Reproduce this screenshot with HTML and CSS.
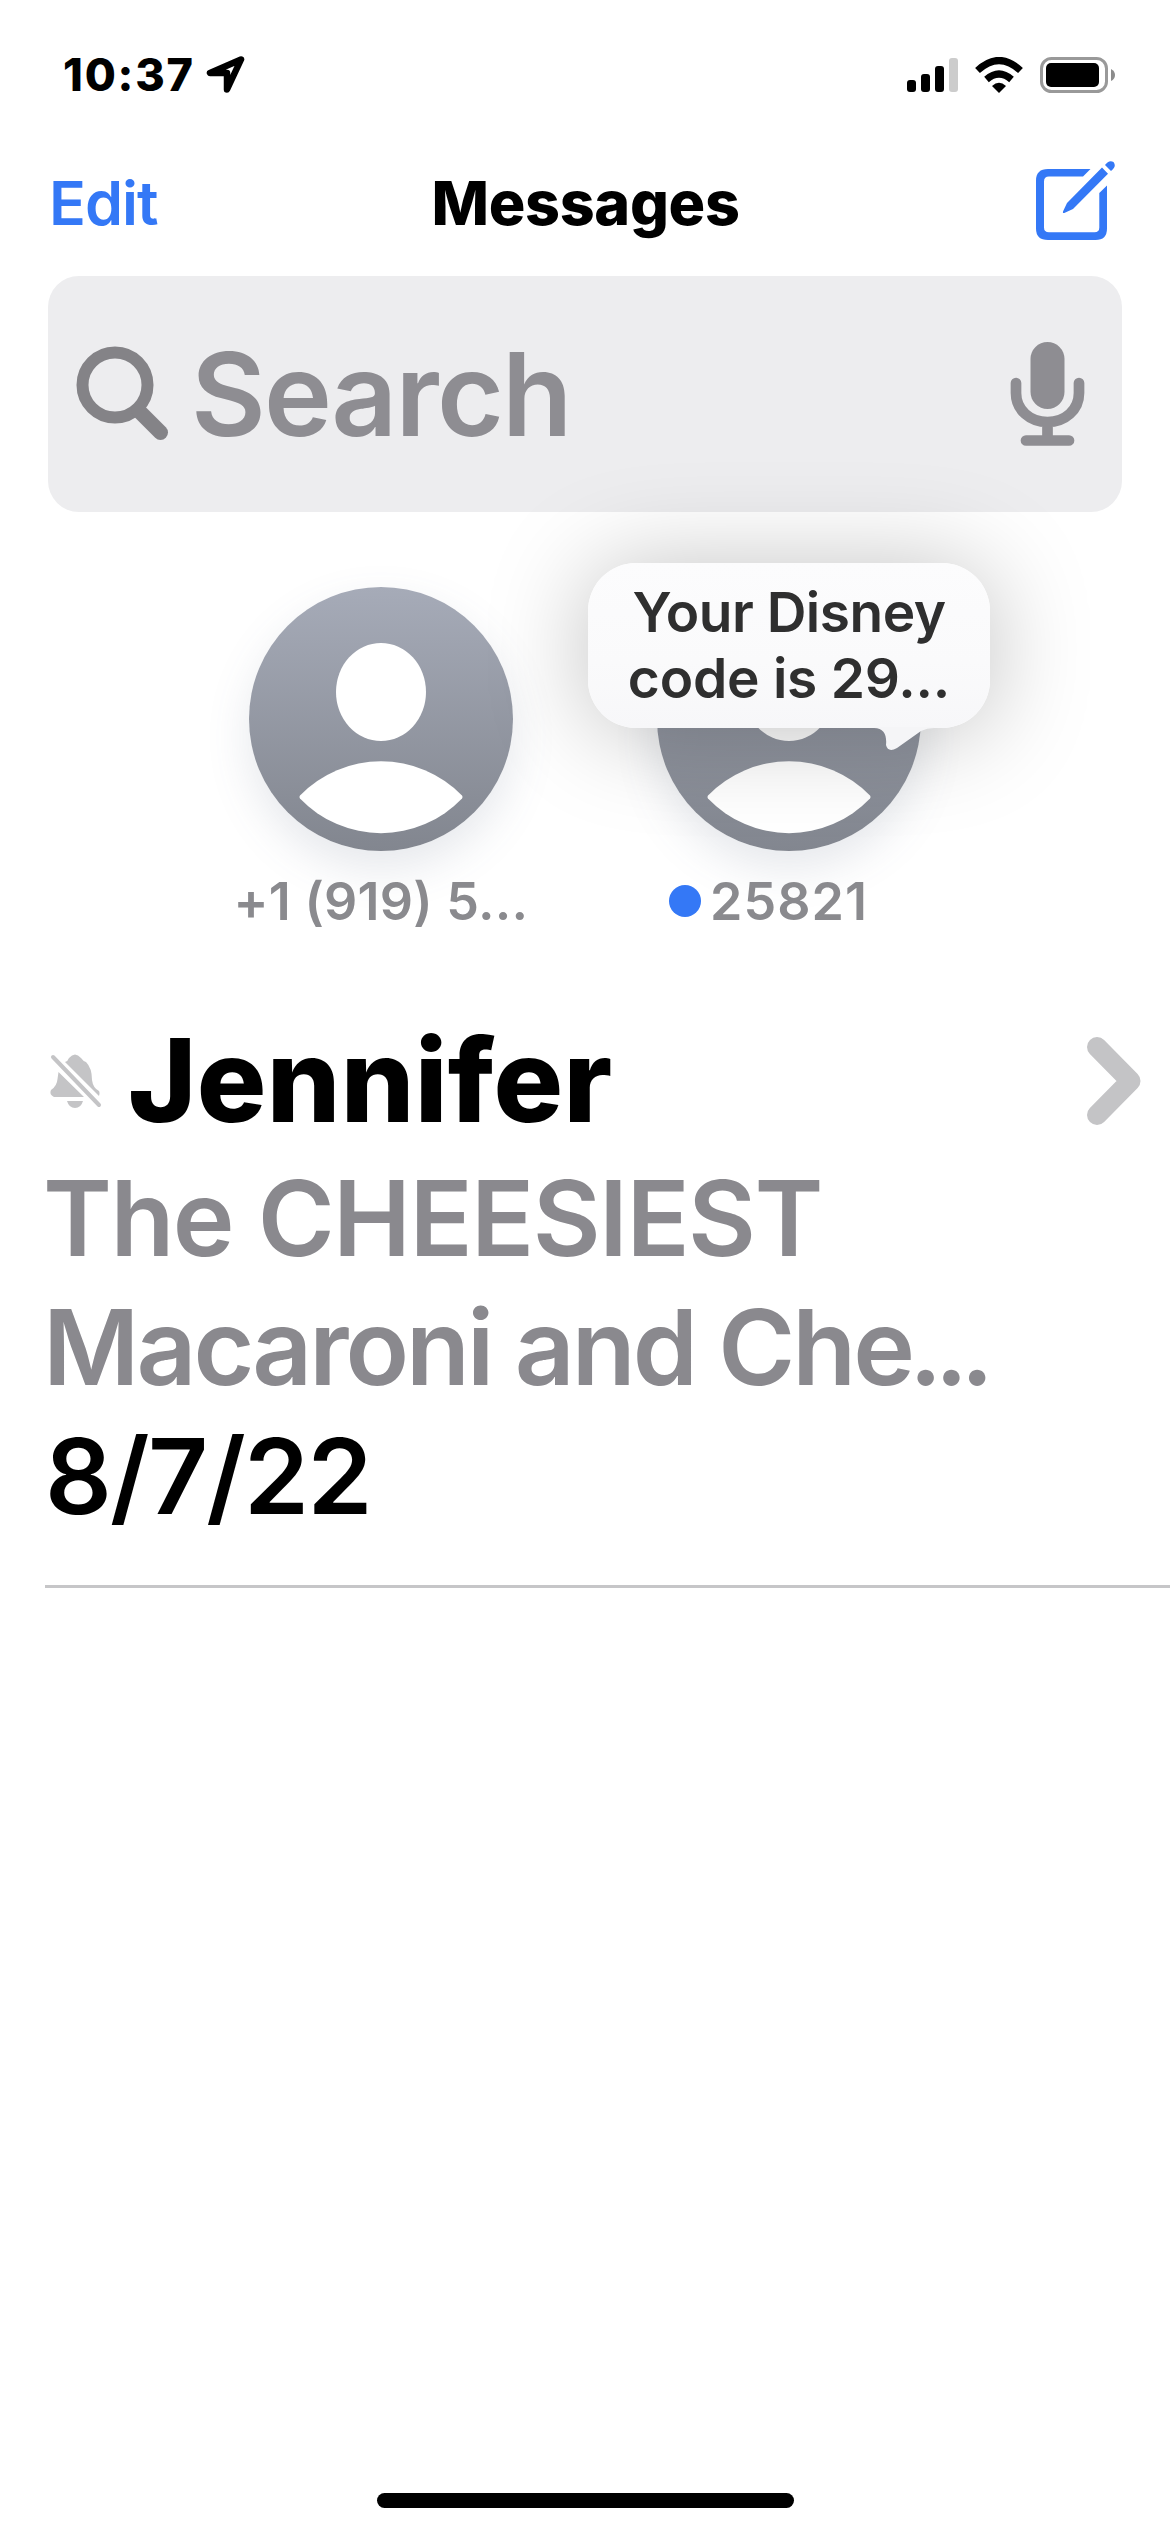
FILE: index.html
```html
<!DOCTYPE html>
<html lang="en">
<head>
<meta charset="utf-8">
<title>Messages</title>
<link rel="stylesheet" href="styles.css">
</head>
<body>
<div class="screen">
  <header class="status">
    <div class="status-left">
      <span class="time">10:37</span>
      <svg class="location" width="40" height="40" viewBox="0 0 40 40"><path d="M35 4.500L4 18L21 18V34.500Z" fill="none" stroke="#000" stroke-width="6.500" stroke-linejoin="round"/></svg>
    </div>
    <div class="status-right">
      <svg width="51" height="34" viewBox="0 0 51 34"><g fill="#000"><rect y="22" width="9" height="12" rx="3"/><rect x="14" y="16" width="9" height="18" rx="3"/><rect x="28" y="8" width="9" height="26" rx="3"/><rect x="42" width="9" height="34" rx="3" fill="#ccc"/></g></svg>
      <svg width="48" height="36" viewBox="0 0 48 36"><path d="M24 36L17 29Q24 22.500 31 29Z"/><path d="M11.500 22.500Q24 11.500 36.500 22.500" fill="none" stroke="#000" stroke-width="7"/><path d="M2.500 13.500Q24 -6.500 45.500 13.500" fill="none" stroke="#000" stroke-width="7"/></svg>
      <svg width="76" height="36" viewBox="0 0 76 36"><rect x="1.500" y="1.500" width="65" height="33" rx="10" fill="none" stroke="#999" stroke-width="3"/><rect x="6" y="6" width="53" height="24" rx="5"/><path d="M71 12Q75 14 75 18T71 24Z" fill="#8c8c8c"/></svg>
    </div>
  </header>
  <nav class="nav">
    <span class="edit">Edit</span>
    <h1 class="title">Messages</h1>
    <svg class="compose" width="80" height="80" viewBox="0 0 80 80"><path d="M54.500 8L47 15.500H13Q8 15.500 8 20.500V66.500Q8 71.300 13 71.300H58.500Q63.300 71.300 63.300 66.500V32L71 24.500V67.500Q71 79 59.500 79H12Q0 79 0 67.500V19.500Q0 8 12 8Z"/><path d="M66 6.500L72 12.800L37 48L28.300 52Q26.500 52.500 27 50.500L31 42ZM69 4Q73 -1.500 77.500 1Q81 5.500 75 10Z"/></svg>
  </nav>
  <div class="search">
    <svg width="94" height="96" viewBox="0 0 94 96"><g fill="none" stroke="#848387"><circle cx="39" cy="39" r="32.500" stroke-width="12"/><path d="M63 65L84.500 86.500" stroke-width="15" stroke-linecap="round"/></g></svg>
    <span class="search-text">Search</span>
    <svg class="mic" width="76" height="106" viewBox="0 0 76 106"><rect x="20.500" y="1" width="34" height="67" rx="17" fill="#8e8d92"/><path d="M6 42V52C6 69 20 81 37.500 81S69 69 69 52V42M37.500 81V99M16 99.500H59" fill="none" stroke="#8e8d92" stroke-width="10.700" stroke-linecap="round"/></svg>
  </div>
  <section class="pinned">
    <div class="pin">
      <div class="avatar"><svg width="264" height="264" viewBox="0 0 264 264"><ellipse cx="132" cy="105" rx="45" ry="49"/><path d="M51 208.500A113 113 0 0 1 213 208.500Q214 210 213 211.500A112 112 0 0 1 51 211.500Q50 210 51 208.500Z"/></svg></div>
      <div class="pin-name phone">+1 (919) 5...</div>
    </div>
    <div class="pin">
      <div class="avatar"><svg width="264" height="264" viewBox="0 0 264 264"><ellipse cx="132" cy="105" rx="45" ry="49"/><path d="M51 208.500A113 113 0 0 1 213 208.500Q214 210 213 211.500A112 112 0 0 1 51 211.500Q50 210 51 208.500Z"/></svg>
        <div class="bubble"><span class="bubble-first">Your Disney</span><span>code is 29...</span>
          <svg class="tail" width="60" height="24" viewBox="0 0 60 24"><path d="M0 0H60V1Q53 1 47 4L23 21Q14 26 12 18C13 8 10 1 0 1Z"/></svg></div>
      </div>
      <div class="pin-name short-code"><i class="unread"></i>25821</div>
    </div>
  </section>
  <article class="conversation">
    <div class="name-row">
      <svg width="52" height="56" viewBox="0 0 52 56"><g fill="#c4c4c6"><path d="M15 9Q18 8 19 5Q25 -2 31 5Q33 8 36 9Q42 15 42 27Q43 35 49 38Q50 40 49 43L15 9Z"/><path d="M8.500 19L34 44H4Q-1 42 1 37Q7 33 7.500 26Z"/><path d="M17 48H33Q31 55 25 55T17 48Z"/></g><path d="M3 4L49 52" stroke="#fff" stroke-width="9"/><path d="M3 4L49 52" stroke="#c4c4c6" stroke-width="4" stroke-linecap="round"/></svg>
      <h2 class="name">Jennifer</h2>
      <svg class="chevron" width="54" height="88" viewBox="0 0 54 88"><path d="M10 10L43.500 44L10 78" fill="none" stroke="#c4c4c6" stroke-width="20" stroke-linecap="round" stroke-linejoin="round"/></svg>
    </div>
    <p class="preview first">The CHEESIEST</p>
    <p class="preview second">Macaroni and Che<span class="dots">...</span></p>
    <p class="date">8/7/22</p>
  </article>
  <div class="home"></div>
</div>
</body>
</html>
```
FILE: styles.css
```css
* { box-sizing: border-box; margin: 0; padding: 0; }
body { background: #fff; color: #000; font-family: Inter, "Liberation Sans", sans-serif; }
svg { display: block; flex: none; }
.screen { width: 1170px; height: 2532px; display: flex; flex-direction: column; overflow: hidden; background: #fff; }

.status { height: 149px; display: flex; align-items: center; justify-content: space-between; padding: 0 54px 0 63px; }
.status-left, .status-right { display: flex; align-items: center; }
.status-left { gap: 11px; }
.status-right { gap: 17px; }
.time { font-size: 45px; font-weight: 800; line-height: 60px; letter-spacing: 1.77px; }

.nav { height: 108px; display: grid; grid-template-columns: 1fr auto 1fr; align-items: center; padding: 0 54px 0 49px; }
.edit { font-size: 61px; font-weight: 600; letter-spacing: -1px; color: #3478f6; }
.title { padding-left: 6px; font-size: 61px; font-weight: 800; letter-spacing: -.3px; }
.compose { justify-self: end; fill: #3478f6; margin-bottom: 4px; }

.search { height: 236px; margin: 19px 48px 0; padding: 0 36px 0 28px; display: flex; align-items: center; background: #ededef; border-radius: 31px; }
.search-text { flex: 1; margin-left: 21px; font-size: 115px; font-weight: 600; letter-spacing: -1.8px; color: #8e8d92; }

.pinned { display: flex; justify-content: center; gap: 144px; padding-top: 75px; height: 504px; }
.pin { width: 264px; display: flex; flex-direction: column; align-items: center; }
.avatar { position: relative; width: 264px; height: 264px; border-radius: 50%; background: linear-gradient(#a6abb8, #82868f); box-shadow: 0 18px 44px rgba(90, 100, 125, .15); }
.avatar svg { fill: #fff; }
.pin-name { position: relative; height: 100px; line-height: 101px; font-size: 52px; font-weight: 600; color: #8a8a8e; white-space: nowrap; }
.phone { letter-spacing: .24px; }
.short-code { letter-spacing: 1.05px; }
.unread { position: absolute; left: -41px; top: 50%; width: 32px; height: 32px; margin-top: -16px; border-radius: 50%; background: #3478f6; }
.bubble { position: absolute; left: -69px; top: -24px; width: 402px; height: 165px; padding-bottom: 2px; display: flex; flex-direction: column; align-items: center; justify-content: center; border-radius: 48px; background: linear-gradient(#fcfcfd, #fafafb 60%, #f7f7f9); box-shadow: 0 4px 100px rgba(0, 0, 0, .25); font-size: 55px; font-weight: 600; line-height: 66px; letter-spacing: -.22px; color: #2f2f2f; white-space: nowrap; }
.bubble-first { letter-spacing: -.5px; }
.bubble .tail { position: absolute; left: 286px; top: 164px; fill: #f5f5f7; }

.conversation { margin-left: 45px; height: 572px; border-bottom: 3px solid #c6c6c8; }
.name-row { height: 129px; margin-bottom: 9px; display: flex; align-items: center; padding: 0 29px 0 5px; }
.name { margin-left: 26px; font-size: 116px; font-weight: 800; line-height: 129px; letter-spacing: .31px; flex: 1; }
.preview, .date { font-size: 104.500px; line-height: 129px; font-weight: 600; white-space: nowrap; }
.preview { margin-left: -2px; color: #8a898e; }
.first { letter-spacing: -1.6px; }
.second { letter-spacing: -3px; }
.dots { margin-left: -3px; letter-spacing: -7.5px; }
.date { letter-spacing: -1.8px; }

.home { width: 417px; height: 15px; margin: auto auto 24px; border-radius: 8px; background: #000; }
```
